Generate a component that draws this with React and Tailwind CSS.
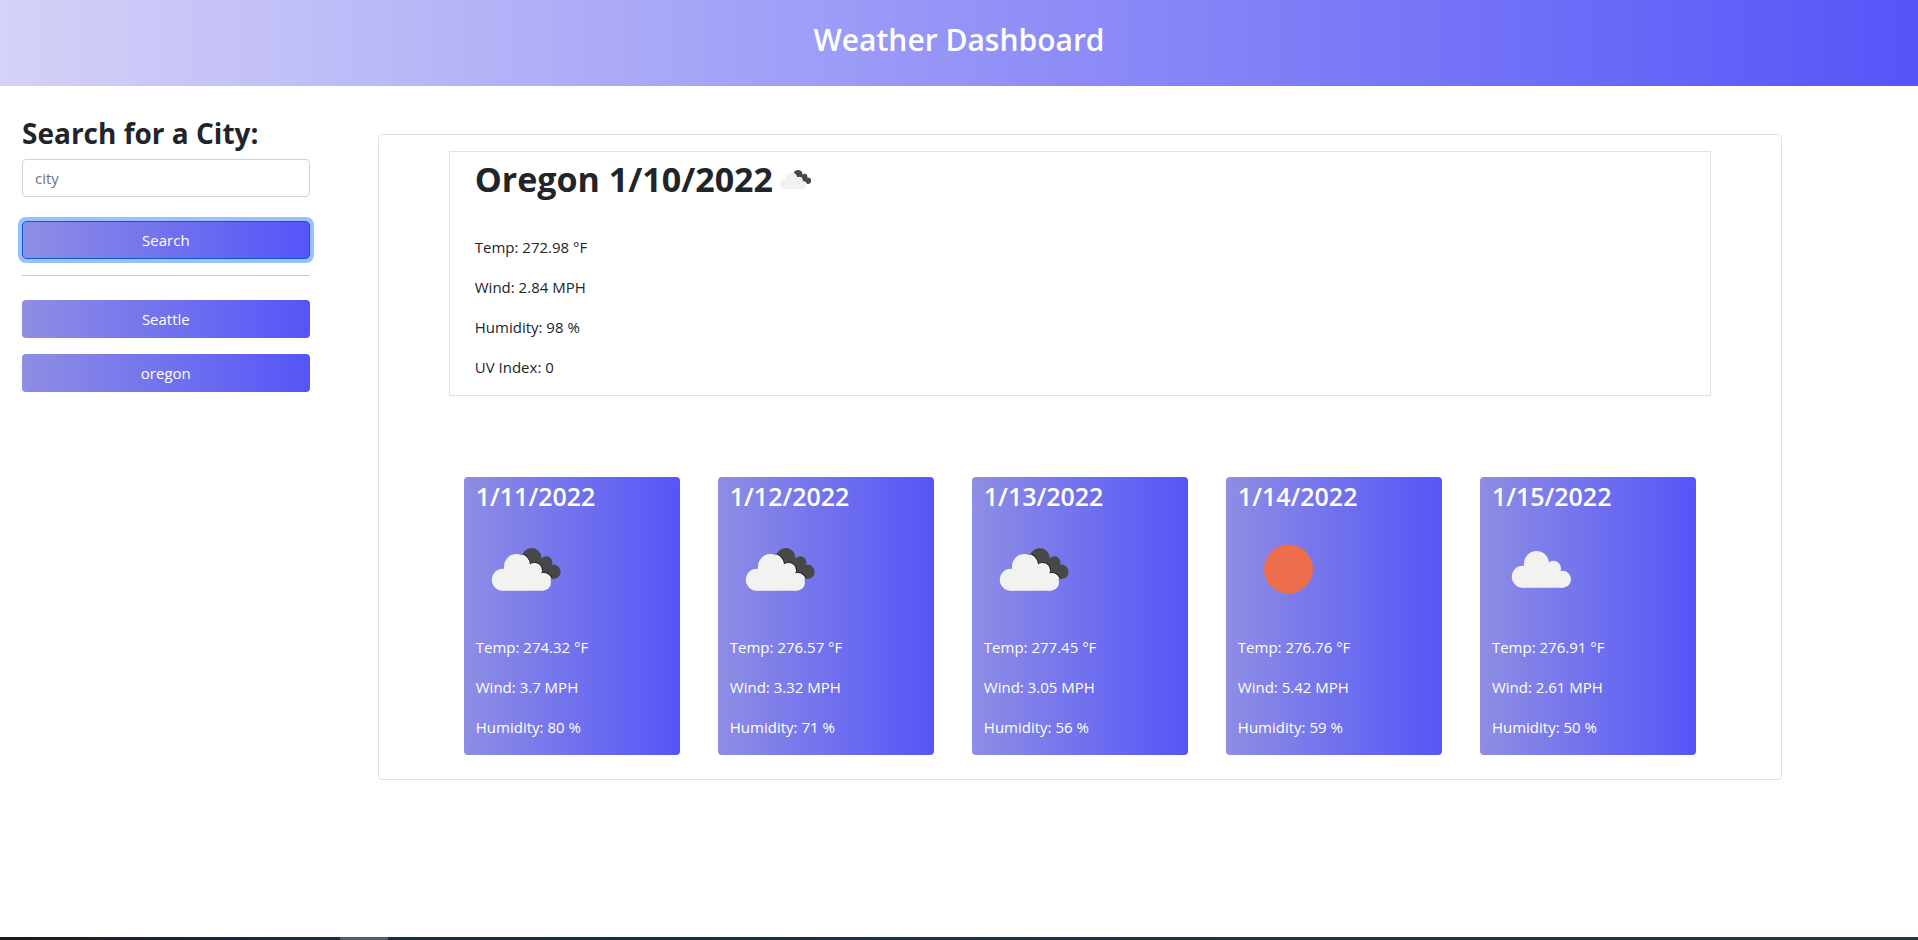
import { useId } from "react";

const days = [
  { date: "1/11/2022", icon: "broken", temp: "274.32", wind: "3.7", humidity: "80" },
  { date: "1/12/2022", icon: "broken", temp: "276.57", wind: "3.32", humidity: "71" },
  { date: "1/13/2022", icon: "broken", temp: "277.45", wind: "3.05", humidity: "56" },
  { date: "1/14/2022", icon: "sun", temp: "276.76", wind: "5.42", humidity: "59" },
  { date: "1/15/2022", icon: "cloud", temp: "276.91", wind: "2.61", humidity: "50" },
];

function FrontCloud() {
  return (
    <g>
      <circle cx="26.8" cy="60.8" r="11" />
      <circle cx="40.5" cy="47.5" r="12.5" />
      <circle cx="57.5" cy="52.2" r="7.5" />
      <circle cx="66.5" cy="63.2" r="8.5" />
      <path d="M28 48h24l12 10 3 13.7H26.8z" />
    </g>
  );
}

function BackCloud() {
  return (
    <>
      <circle cx="55.7" cy="39" r="10" />
      <circle cx="70.3" cy="43.4" r="6.1" />
      <circle cx="77.4" cy="52.8" r="7.2" />
      <path d="M56 38l15 4 6 10-2 8-12-4-14-14z" />
    </>
  );
}

function WeatherIcon({ kind, className }) {
  const clip = useId();
  return (
    <svg viewBox="0 0 100 100" className={className} aria-hidden="true">
      {kind === "sun" && <circle cx="50.5" cy="50" r="24.5" fill="#ec6e4c" />}
      {kind === "broken" && (
        <g>
          <clipPath id={clip}><BackCloud /></clipPath>
          <g fill="#484849"><BackCloud /></g>
          <g clipPath={`url(#${clip})`}>
            <g fill="#222" transform="translate(1.8 -1.4)"><FrontCloud /></g>
            <g fill="#fff" transform="translate(1 -0.8)"><FrontCloud /></g>
          </g>
          <g fill="#f2f2f0"><FrontCloud /></g>
        </g>
      )}
      {kind === "cloud" && (
        <g fill="#f2f2f0" transform="translate(4 -3)"><FrontCloud /></g>
      )}
    </svg>
  );
}

const barButton =
  "h-[38px] w-full rounded bg-linear-to-r/srgb from-[#8e8ee4] to-[#5555f8] text-[15px] leading-6 text-white";

export default function App() {
  return (
    <div className="flex min-h-screen flex-col bg-white font-['Open_Sans','Noto_Sans',sans-serif] text-[15px] leading-6 text-[#212529]">
      <header className="bg-linear-to-r/srgb from-[#d4d2f7] to-[#5555f8] pt-5 pb-[26px] text-center">
        <h1 className="text-[30px] leading-10 font-semibold text-white">Weather Dashboard</h1>
      </header>
      <div className="flex grow items-start">
        <aside className="w-1/6 pt-7 pr-[10px] pl-[22px]">
          <form onSubmit={(e) => e.preventDefault()}>
            <label htmlFor="city" className="block text-[28px] leading-[38px] font-bold">Search for a City:</label>
            <input
              id="city"
              type="text"
              placeholder="city"
              className="mt-[7px] block h-[38px] w-full rounded border border-[#ced4da] px-3 outline-none placeholder:text-[#6c757d]"
            />
            <button
              type="submit"
              className={`${barButton} mt-6 block border border-[#0a58ca] ring-4 ring-[#98c1fe] outline-none`}
            >
              Search
            </button>
          </form>
          <hr className="mt-4 border-[#c8c9ca]" />
          <div className="mt-6 flex flex-col gap-4">
            <button type="button" className={barButton}>Seattle</button>
            <button type="button" className={barButton}>oregon</button>
          </div>
        </aside>
        <main className="mt-12 mr-[136px] ml-[58px] grow rounded border border-[#dee2e6] pt-4 pb-6">
          <section className="mx-[5%] border border-[#dee2e6] px-[25px] pb-4">
            <h2 className="flex items-center text-[34px] leading-[55px] font-bold">
              Oregon 1/10/2022
              <WeatherIcon kind="broken" className="h-[45px] w-[45px]" />
            </h2>
            <div className="mt-7 flex flex-col gap-4">
              <p>Temp: 272.98 °F</p>
              <p>Wind: 2.84 MPH</p>
              <p>Humidity: 98 %</p>
              <p>UV Index: 0</p>
            </div>
          </section>
          <section className="mx-[5%] mt-[81px] flex justify-between px-[15px]">
            {days.map((d) => (
              <article key={d.date} className="w-[216px] rounded bg-linear-to-r/srgb from-[#8e8ee4] to-[#5555f8] px-3 pb-4 text-white">
                <h3 className="pt-1 text-[25px] leading-[30px] font-semibold">{d.date}</h3>
                <WeatherIcon kind={d.icon} className="mt-2 h-[100px] w-[100px]" />
                <div className="mt-4 flex flex-col gap-4">
                  <p>Temp: {d.temp} °F</p>
                  <p>Wind: {d.wind} MPH</p>
                  <p>Humidity: {d.humidity} %</p>
                </div>
              </article>
            ))}
          </section>
        </main>
      </div>
      <footer className="flex h-[3px] bg-linear-to-r/srgb from-[#1f1a17] via-[#1d2c40] via-15% to-[#213a3c]">
        <div className="ml-[340px] w-12 bg-[#555d68]" />
      </footer>
    </div>
  );
}
